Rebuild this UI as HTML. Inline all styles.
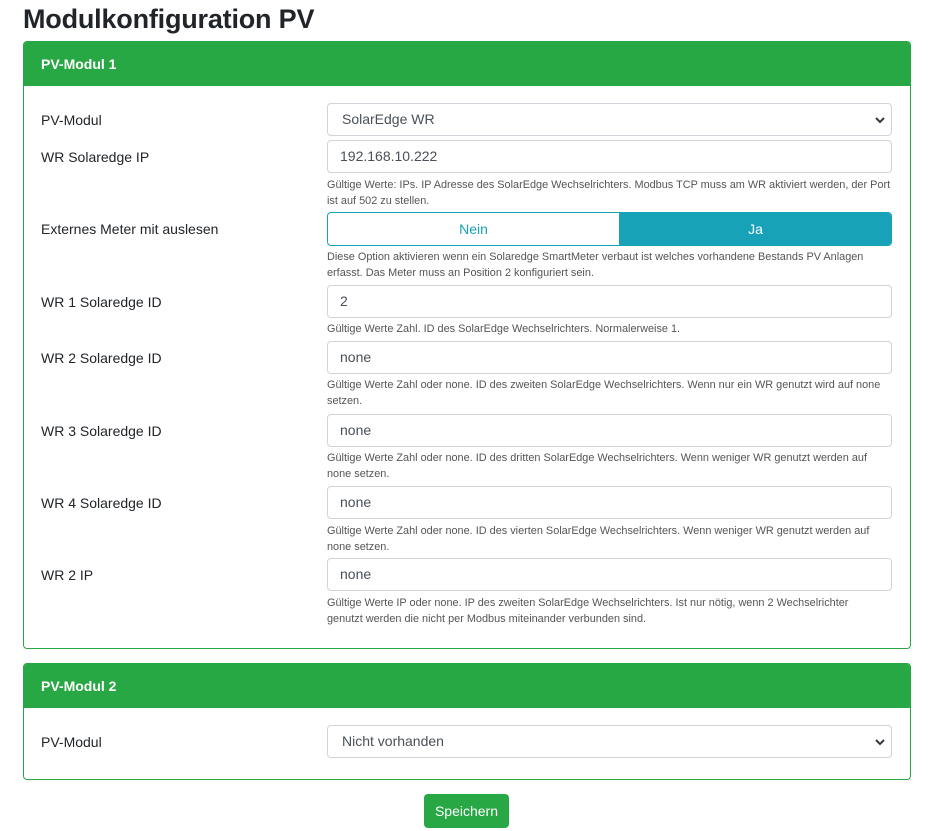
<!DOCTYPE html>
<html><head><meta charset="utf-8"><style>
*{box-sizing:border-box;margin:0;padding:0}
body{width:929px;height:831px;background:#fff;font-family:"Liberation Sans",sans-serif;color:#212529;position:relative;overflow:hidden}
.a{position:absolute}
h1{position:absolute;left:23px;top:4px;font-size:27px;font-weight:bold;color:#212529;letter-spacing:-0.2px}
.card{position:absolute;left:23px;width:888px;border:1px solid #28a745;border-radius:4px;overflow:hidden}
.hd{background:#28a745;color:#fff;font-weight:bold;font-size:14px;height:44px;line-height:44px;padding-left:17px}
.lbl{position:absolute;left:41px;font-size:14px;color:#212529}
.in{position:absolute;left:327px;width:565px;height:33px;border:1px solid #ced4da;border-radius:4px;font-size:14px;line-height:31px;padding-left:12px;color:#495057;background:#fff}
.in svg{position:absolute;right:5px;top:11px}
.help{position:absolute;left:327px;font-size:10.9px;line-height:16px;white-space:nowrap;color:#555}
</style></head><body>
<h1>Modulkonfiguration PV</h1>
<div class="card" style="top:41px;height:608px"><div class="hd">PV-Modul 1</div></div>
<div class="card" style="top:663px;height:117px"><div class="hd">PV-Modul 2</div></div>

<div class="lbl" style="top:112px">PV-Modul</div>
<div class="in" style="top:103px;padding-left:14px">SolarEdge WR<svg width="12" height="10" viewBox="0 0 12 10"><path d="M2 3l4 4 4-4" stroke="#343a40" stroke-width="2" fill="none"/></svg></div>

<div class="lbl" style="top:149px">WR Solaredge IP</div>
<div class="in" style="top:140px">192.168.10.222</div>
<div class="help" style="top:177px">Gültige Werte: IPs. IP Adresse des SolarEdge Wechselrichters. Modbus TCP muss am WR aktiviert werden, der Port<br>ist auf 502 zu stellen.</div>

<div class="lbl" style="top:221px">Externes Meter mit auslesen</div>
<div class="a" style="left:327px;top:212px;width:565px;height:34px;border:1px solid #17a2b8;border-radius:4px;overflow:hidden">
<div class="a" style="left:0;top:0;width:291px;height:32px;line-height:32px;text-align:center;color:#17a2b8;font-size:14px">Nein</div>
<div class="a" style="left:291px;top:0;width:273px;height:32px;line-height:32px;text-align:center;color:#fff;background:#17a2b8;font-size:14px">Ja</div></div>
<div class="help" style="top:249px">Diese Option aktivieren wenn ein Solaredge SmartMeter verbaut ist welches vorhandene Bestands PV Anlagen<br>erfasst. Das Meter muss an Position 2 konfiguriert sein.</div>

<div class="lbl" style="top:294px">WR 1 Solaredge ID</div>
<div class="in" style="top:285px">2</div>
<div class="help" style="top:321px">Gültige Werte Zahl. ID des SolarEdge Wechselrichters. Normalerweise 1.</div>

<div class="lbl" style="top:350px">WR 2 Solaredge ID</div>
<div class="in" style="top:341px">none</div>
<div class="help" style="top:377px">Gültige Werte Zahl oder none. ID des zweiten SolarEdge Wechselrichters. Wenn nur ein WR genutzt wird auf none<br>setzen.</div>

<div class="lbl" style="top:423px">WR 3 Solaredge ID</div>
<div class="in" style="top:414px">none</div>
<div class="help" style="top:450px">Gültige Werte Zahl oder none. ID des dritten SolarEdge Wechselrichters. Wenn weniger WR genutzt werden auf<br>none setzen.</div>

<div class="lbl" style="top:495px">WR 4 Solaredge ID</div>
<div class="in" style="top:486px">none</div>
<div class="help" style="top:523px">Gültige Werte Zahl oder none. ID des vierten SolarEdge Wechselrichters. Wenn weniger WR genutzt werden auf<br>none setzen.</div>

<div class="lbl" style="top:567px">WR 2 IP</div>
<div class="in" style="top:558px">none</div>
<div class="help" style="top:595px">Gültige Werte IP oder none. IP des zweiten SolarEdge Wechselrichters. Ist nur nötig, wenn 2 Wechselrichter<br>genutzt werden die nicht per Modbus miteinander verbunden sind.</div>

<div class="lbl" style="top:734px">PV-Modul</div>
<div class="in" style="top:725px;padding-left:14px">Nicht vorhanden<svg width="12" height="10" viewBox="0 0 12 10"><path d="M2 3l4 4 4-4" stroke="#343a40" stroke-width="2" fill="none"/></svg></div>

<div class="a" style="left:424px;top:794px;width:85px;height:34px;background:#28a745;border-radius:4px;color:#fff;font-size:14px;line-height:34px;text-align:center">Speichern</div>
</body></html>
